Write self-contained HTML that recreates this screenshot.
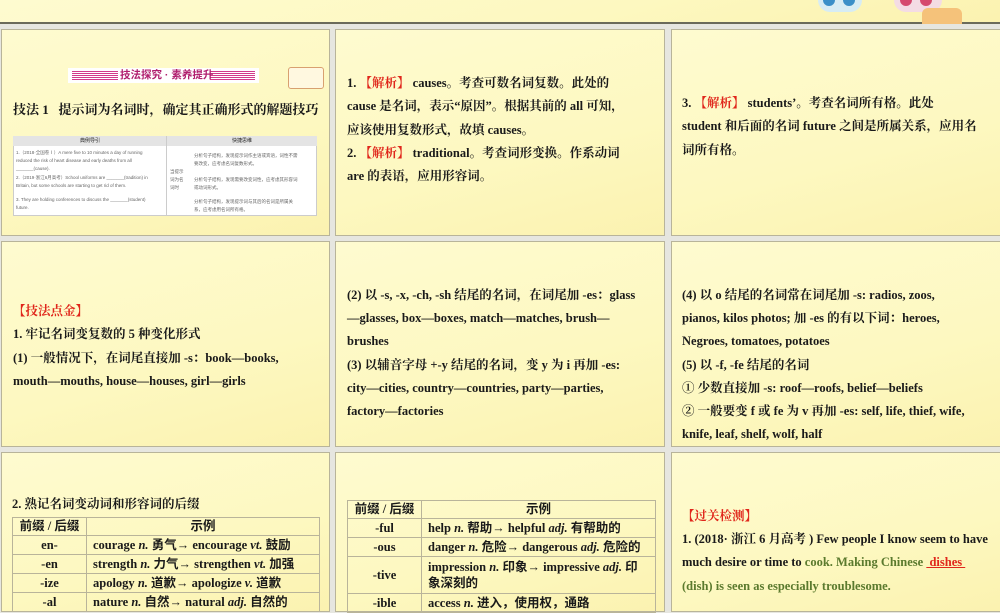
<!DOCTYPE html>
<html><head><meta charset="utf-8"><style>
*{margin:0;padding:0;box-sizing:border-box}
body{width:1000px;height:600px;background:#e6e6e0;position:relative;overflow:hidden;font-family:"Liberation Serif","Noto Serif CJK SC",serif;font-weight:bold;color:#1a1a1a;font-size:12.5px}
.p{position:absolute;background:linear-gradient(165deg,#fefbd0 0%,#fdf8c0 60%,#fbf2b0 100%);border:1px solid #b8b49a}
.t{position:absolute;white-space:nowrap;line-height:16px}
.r{color:#e0261b}
.g{color:#5b7a2e}
table{border-collapse:collapse;position:absolute;font-size:12.5px;font-family:"Liberation Serif","Noto Sans CJK SC",sans-serif}
td{border:1px solid #b9b49a;padding:0 6px;line-height:17px;white-space:nowrap}
.c{text-align:center}
.k{font-family:"Liberation Sans","Noto Sans CJK SC",sans-serif;font-weight:normal}
</style></head><body>
<div class="p" style="left:-2px;top:-2px;width:1004px;height:26px;border-bottom:2px solid #6a6a5a"></div>
<div style="position:absolute;left:818px;top:0;width:44px;height:12px;border-radius:0 0 22px 22px;background:#d7ecf4"></div>
<div style="position:absolute;left:823px;top:0;width:12px;height:6px;border-radius:0 0 6px 6px;background:#3a8fc8"></div>
<div style="position:absolute;left:843px;top:0;width:12px;height:6px;border-radius:0 0 6px 6px;background:#3a8fc8"></div>
<div style="position:absolute;left:894px;top:0;width:48px;height:12px;border-radius:0 0 22px 22px;background:#f4dce4"></div>
<div style="position:absolute;left:900px;top:0;width:12px;height:6px;border-radius:0 0 6px 6px;background:#d54a6e"></div>
<div style="position:absolute;left:920px;top:0;width:12px;height:6px;border-radius:0 0 6px 6px;background:#d54a6e"></div>
<div style="position:absolute;left:922px;top:8px;width:40px;height:16px;background:#f5c27a;border-radius:6px 6px 0 0"></div>

<div class="p" style="left:1px;top:29px;width:329px;height:207px"></div>
<div class="p" style="left:335px;top:29px;width:330px;height:207px"></div>
<div class="p" style="left:671px;top:29px;width:330px;height:207px"></div>
<div class="p" style="left:1px;top:241px;width:329px;height:206px"></div>
<div class="p" style="left:335px;top:241px;width:330px;height:206px"></div>
<div class="p" style="left:671px;top:241px;width:330px;height:206px"></div>
<div class="p" style="left:1px;top:452px;width:329px;height:160px"></div>
<div class="p" style="left:335px;top:452px;width:330px;height:160px"></div>
<div class="p" style="left:671px;top:452px;width:330px;height:160px"></div>

<div style="position:absolute;left:68px;top:68px;width:191px;height:15px;background:#fff"></div>
<div style="position:absolute;left:72px;top:71px;width:46px;height:9px;background:repeating-linear-gradient(#d23a8a 0 1px,transparent 1px 2px)"></div>
<div style="position:absolute;left:210px;top:71px;width:45px;height:9px;background:repeating-linear-gradient(#d23a8a 0 1px,transparent 1px 2px)"></div>
<div class="t k" style="left:120px;top:68px;font-size:10.5px;color:#b01e6e;font-weight:bold;line-height:15px">技法探究 · 素养提升</div>
<div style="position:absolute;left:288px;top:67px;width:36px;height:22px;border:1px solid #d8a070;background:#fff8e0;border-radius:3px"></div>
<div class="t" style="left:13px;top:102px;font-size:13px">技法 1&nbsp;&nbsp;&nbsp;提示词为名词时，确定其正确形式的解题技巧</div>
<div style="position:absolute;left:13px;top:136px;width:304px;height:80px;background:#fff;border:1px solid #ccc"></div>
<div style="position:absolute;left:13px;top:136px;width:304px;height:10px;background:#e4e4e4"></div>
<div style="position:absolute;left:166px;top:136px;width:1px;height:80px;background:#ccc"></div>
<div class="t k" style="left:80px;top:136px;font-size:5px;line-height:10px">典例导引</div>
<div class="t k" style="left:232px;top:136px;font-size:5px;line-height:10px">快捷思维</div>
<div class="t k" style="left:16px;top:149px;font-size:4.5px;line-height:8px;color:#666">1.（2018·全国卷Ⅰ）A mere five to 10 minutes a day of running<br>reduced the risk of heart disease and early deaths from all<br>_______(cause).</div>
<div class="t k" style="left:16px;top:174px;font-size:4.5px;line-height:8px;color:#666">2.（2019·浙江6月高考）School uniforms are _______(tradition) in<br>Britain, but some schools are starting to get rid of them.</div>
<div class="t k" style="left:16px;top:196px;font-size:4.5px;line-height:8px;color:#666">3. They are holding conferences to discuss the _______(student)<br>future.</div>
<div class="t k" style="left:170px;top:168px;font-size:4.5px;line-height:8px;color:#666">当提示<br>词为名<br>词时</div>
<div class="t k" style="left:194px;top:152px;font-size:4.5px;line-height:8px;color:#666">分析句子结构，发现提示词作主语或宾语，词性不需<br>要改变，应考虑名词复数形式。</div>
<div class="t k" style="left:194px;top:176px;font-size:4.5px;line-height:8px;color:#666">分析句子结构，发现需要改变词性，应考虑其形容词<br>或动词形式。</div>
<div class="t k" style="left:194px;top:198px;font-size:4.5px;line-height:8px;color:#666">分析句子结构，发现提示词与其后的名词是所属关<br>系，应考虑用名词所有格。</div>

<div class="t" style="left:347px;top:72px;line-height:23.3px">1. <span class="r">【解析】</span> causes。考查可数名词复数。此处的<br>cause 是名词，表示“原因”。根据其前的 all 可知，<br>应该使用复数形式，故填 causes。<br>2. <span class="r">【解析】</span> traditional。考查词形变换。作系动词<br>are 的表语，应用形容词。</div>
<div class="t" style="left:682px;top:92px;line-height:23.3px">3. <span class="r">【解析】</span> students’。考查名词所有格。此处<br>student 和后面的名词 future 之间是所属关系，应用名<br>词所有格。</div>

<div class="t" style="left:13px;top:300px;line-height:23.3px"><span class="r">【技法点金】</span><br>1. 牢记名词变复数的 5 种变化形式<br>(1) 一般情况下，在词尾直接加 -s：book—books,<br>mouth—mouths, house—houses, girl—girls</div>
<div class="t" style="left:347px;top:284px;line-height:23.2px">(2) 以 -s, -x, -ch, -sh 结尾的名词，在词尾加 -es：glass<br>—glasses, box—boxes, match—matches, brush—<br>brushes<br>(3) 以辅音字母 +-y 结尾的名词，变 y 为 i 再加 -es:<br>city—cities, country—countries, party—parties,<br>factory—factories</div>
<div class="t" style="left:682px;top:284px;line-height:23.2px">(4) 以 o 结尾的名词常在词尾加 -s: radios, zoos,<br>pianos, kilos photos; 加 -es 的有以下词：heroes,<br>Negroes, tomatoes, potatoes<br>(5) 以 -f, -fe 结尾的名词<br>① 少数直接加 -s: roof—roofs, belief—beliefs<br>② 一般要变 f 或 fe 为 v 再加 -es: self, life, thief, wife,<br>knife, leaf, shelf, wolf, half</div>

<div class="t" style="left:12px;top:496px">2. 熟记名词变动词和形容词的后缀</div>
<table style="left:12px;top:517px;width:308px">
<tr><td class="c" style="width:74px">前缀 / 后缀</td><td class="c">示例</td></tr>
<tr><td class="c" style="height:19px">en-</td><td>courage <i>n.</i> 勇气→ encourage <i>vt.</i> 鼓励</td></tr>
<tr><td class="c" style="height:19px">-en</td><td>strength <i>n.</i> 力气→ strengthen <i>vt.</i> 加强</td></tr>
<tr><td class="c" style="height:19px">-ize</td><td>apology <i>n.</i> 道歉→ apologize <i>v.</i> 道歉</td></tr>
<tr><td class="c" style="height:19px">-al</td><td>nature <i>n.</i> 自然→ natural <i>adj.</i> 自然的</td></tr>
</table>
<table style="left:347px;top:500px;width:309px">
<tr><td class="c" style="width:74px">前缀 / 后缀</td><td class="c">示例</td></tr>
<tr><td class="c" style="height:19px">-ful</td><td>help <i>n.</i> 帮助→ helpful <i>adj.</i> 有帮助的</td></tr>
<tr><td class="c" style="height:19px">-ous</td><td>danger <i>n.</i> 危险→ dangerous <i>adj.</i> 危险的</td></tr>
<tr><td class="c" style="height:37px">-tive</td><td style="line-height:16px">impression <i>n.</i> 印象→ impressive <i>adj.</i> 印<br>象深刻的</td></tr>
<tr><td class="c" style="height:19px">-ible</td><td>access <i>n.</i> 进入，使用权，通路</td></tr>
</table>
<div class="t" style="left:682px;top:505px;line-height:23.2px"><span class="r">【过关检测】</span><br>1. (2018· 浙江 6 月高考 ) Few people I know seem to have<br>much desire or time to <span class="g">cook. Making Chinese</span> <span class="r" style="text-decoration:underline">&nbsp;dishes&nbsp;</span><br><span class="g">(dish) is seen as especially troublesome.</span></div>
</body></html>
